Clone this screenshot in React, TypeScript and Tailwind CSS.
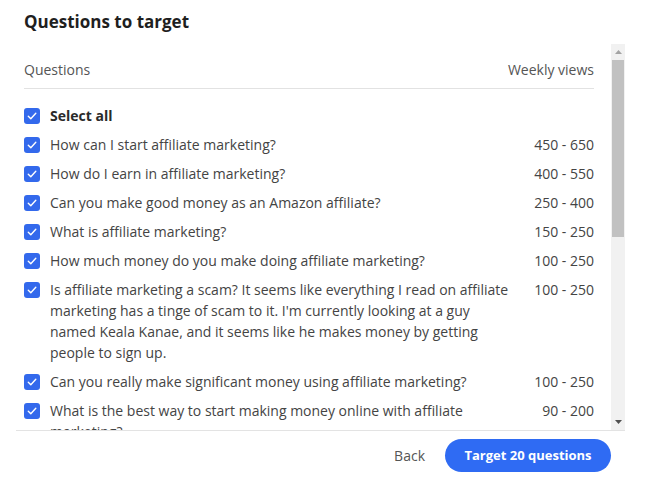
import React from "react";

const rows: { q: string; v: string }[] = [
  { q: "How can I start affiliate marketing?", v: "450 - 650" },
  { q: "How do I earn in affiliate marketing?", v: "400 - 550" },
  { q: "Can you make good money as an Amazon affiliate?", v: "250 - 400" },
  { q: "What is affiliate marketing?", v: "150 - 250" },
  { q: "How much money do you make doing affiliate marketing?", v: "100 - 250" },
  {
    q: "Is affiliate marketing a scam? It seems like everything I read on affiliate marketing has a tinge of scam to it. I'm currently looking at a guy named Keala Kanae, and it seems like he makes money by getting people to sign up.",
    v: "100 - 250",
  },
  { q: "Can you really make significant money using affiliate marketing?", v: "100 - 250" },
  { q: "What is the best way to start making money online with affiliate marketing?", v: "90 - 200" },
  { q: "How do affiliate marketers get paid?", v: "90 - 200" },
];

function Check() {
  return (
    <span className="mt-[2.5px] flex h-[16px] w-[16px] shrink-0 items-center justify-center rounded-[3px] bg-[#3369ec]">
      <svg width="12" height="12" viewBox="0 0 12 12" fill="none">
        <path d="M2.3 6.3 L4.8 8.7 L9.8 3.3" stroke="white" strokeWidth="1.4" strokeLinecap="round" strokeLinejoin="round" />
      </svg>
    </span>
  );
}

export default function App() {
  return (
    <div
      className="h-[484px] w-[656px] overflow-hidden bg-white"
      style={{ fontFamily: '"Open Sans", "Noto Sans", sans-serif' }}
    >
      <div className="h-[44px] px-6 pt-[8px] text-[17px] font-bold leading-[28px] text-[#1f1f1f]">
        Questions to target
      </div>
      <div className="ml-4 mr-[31px] flex h-[387px] border-b border-[#e3e3e3]">
        <div className="flex-1 overflow-hidden pl-2 pr-[17px] pt-4">
          <div className="flex justify-between border-b border-[#e2e2e2] pb-2 text-[14px] leading-[20px] text-[#555]">
            <span>Questions</span>
            <span>Weekly views</span>
          </div>
          <div className="mt-3 flex flex-col">
            <div className="flex items-start gap-[10px] py-1">
              <Check />
              <span className="text-[14px] font-bold leading-[21px] text-[#2a2a2a]">Select all</span>
            </div>
            {rows.map((r) => (
              <div key={r.q} className="flex items-start py-1 text-[14px] leading-[21px] text-[#444]">
                <Check />
                <span className="ml-[10px] flex-1 pr-[8px]">{r.q}</span>
                <span className="ml-[10px] w-[64px] shrink-0 whitespace-nowrap text-right">{r.v}</span>
              </div>
            ))}
          </div>
        </div>
        <div className="flex w-[14px] flex-col bg-[#f1f1f1]">
          <div className="flex h-[16px] items-center justify-center">
            <svg width="7" height="4" viewBox="0 0 7 4"><path d="M0 4 L3.5 0 L7 4Z" fill="#a3a3a3" /></svg>
          </div>
          <div className="mx-[1px] h-[177px] bg-[#c1c1c1]" />
          <div className="flex-1" />
          <div className="flex h-[16px] items-center justify-center">
            <svg width="7" height="4" viewBox="0 0 7 4"><path d="M0 0 L7 0 L3.5 4Z" fill="#505050" /></svg>
          </div>
        </div>
      </div>
      <div className="flex items-center justify-end gap-[20px] pr-[45px] pt-[8px]">
        <span className="text-[14px] text-[#555]">Back</span>
        <button className="h-[33px] w-[166px] whitespace-nowrap rounded-full bg-[#2f6bf3] text-[13px] font-bold leading-[33px] text-white">
          Target 20 questions
        </button>
      </div>
    </div>
  );
}
